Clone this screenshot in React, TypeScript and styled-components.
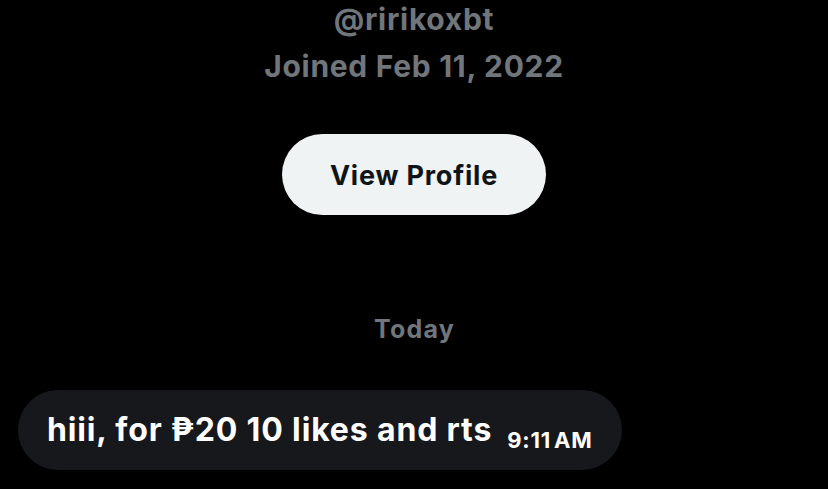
import React from "react";
import styled, { createGlobalStyle } from "styled-components";

const GlobalStyle = createGlobalStyle`
    html, body {
        margin: 0;
        padding: 0;
        background: #000;
        font-family: Inter, "Noto Sans", sans-serif;
    }
`;

const Page = styled.div`
    width: 828px;
    height: 489px;
    overflow: hidden;
    background: #000;
    display: flex;
    flex-direction: column;
`;

const ProfileInfo = styled.div`
    display: flex;
    flex-direction: column;
    align-items: center;
    padding-top: 1px;
`;

const MutedLine = styled.div`
    color: #71767b;
    font-weight: 700;
    font-size: 30px;
    line-height: 36px;
    letter-spacing: 0.7px;
    margin-bottom: 11px;
`;

const ViewProfileButton = styled.button`
    margin-top: 39px;
    width: 264px;
    height: 81px;
    border-radius: 41px;
    border: none;
    background: #eff3f4;
    color: #0f1419;
    font-family: Inter, "Noto Sans", sans-serif;
    font-weight: 700;
    font-size: 27px;
    letter-spacing: 0.8px;
    padding-top: 2px;
`;

const DayDivider = styled.div`
    margin-top: 99px;
    text-align: center;
    color: #71767b;
    font-weight: 700;
    font-size: 25px;
    line-height: 30px;
    letter-spacing: 1.2px;
    padding-left: 1px;
`;

const Bubble = styled.div`
    margin: 46px 0 0 18px;
    width: 604px;
    height: 80px;
    box-sizing: border-box;
    border-radius: 40px;
    background: #16181c;
    display: flex;
    align-items: baseline;
    padding: 0 29px;
    gap: 15px;
    line-height: 80px;
`;

const MessageText = styled.span`
    color: #fff;
    font-weight: 700;
    font-size: 32px;
    letter-spacing: 0.85px;
`;

const TimeStamp = styled.span`
    color: #fff;
    font-weight: 700;
    font-size: 22px;
    letter-spacing: 0.8px;
    word-spacing: -3px;
    position: relative;
    top: 7px;
`;

export default function App() {
    return (
        <>
            <GlobalStyle />
            <Page>
                <ProfileInfo>
                    <MutedLine>@ririkoxbt</MutedLine>
                    <MutedLine>Joined Feb 11, 2022</MutedLine>
                    <ViewProfileButton>View Profile</ViewProfileButton>
                </ProfileInfo>
                <DayDivider>Today</DayDivider>
                <Bubble>
                    <MessageText>hiii, for ₱20 10 likes and rts</MessageText>
                    <TimeStamp>9:11 AM</TimeStamp>
                </Bubble>
            </Page>
        </>
    );
}
